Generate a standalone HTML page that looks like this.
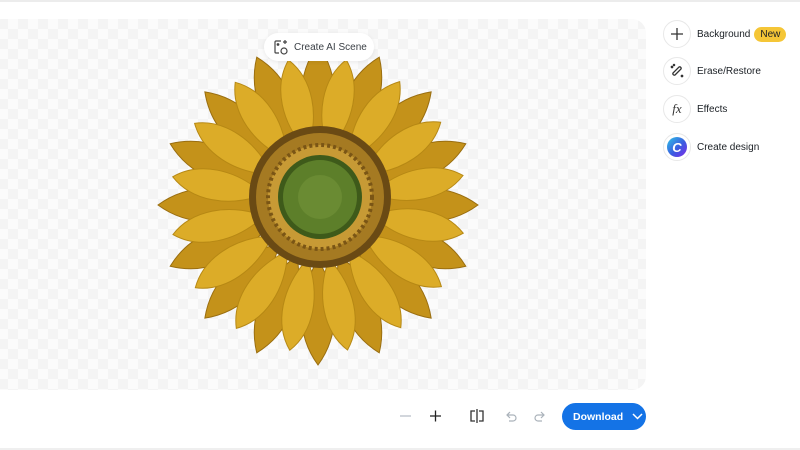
<!DOCTYPE html>
<html><head><meta charset="utf-8"><style>
*{margin:0;padding:0;box-sizing:border-box}
body{width:800px;height:450px;background:#fff;font-family:"Liberation Sans",sans-serif;position:relative;overflow:hidden;color:#0e1318}
.topline{position:absolute;left:0;top:0;width:800px;height:2px;background:#ececec}
.canvas{position:absolute;left:-12px;top:19px;width:658px;height:371px;border-radius:14px;overflow:hidden;
background-color:#fbfbfb;background-image:linear-gradient(45deg,#f4f4f4 25%,transparent 25%,transparent 75%,#f4f4f4 75%),linear-gradient(45deg,#f4f4f4 25%,transparent 25%,transparent 75%,#f4f4f4 75%);background-size:20px 20px;background-position:0 0,10px 10px}
.pill{position:absolute;left:264px;top:33px;width:110px;height:28px;background:#fff;border-radius:14px;box-shadow:0 1px 4px rgba(0,0,0,.08);font-size:10px;color:#3a3f45;display:flex;align-items:center;padding-left:9px;white-space:nowrap}
.pill svg{margin-right:5px}
.item{position:absolute;left:663px;display:flex;align-items:center;font-size:10px;color:#1a1f24;white-space:nowrap}
.circ{width:28px;height:28px;border-radius:50%;border:1.5px solid #e8e8e8;display:flex;align-items:center;justify-content:center;margin-right:6px;background:#fff}
.new{background:#f5c637;border-radius:9px;padding:2px 6px;margin-left:4px;font-size:10px;color:#1a1f24}
.dl{position:absolute;left:562px;top:403px;width:84px;height:27px;background:#1473e6;border-radius:14px;color:#fff;font-size:10.5px;font-weight:bold;display:flex;align-items:center;padding-left:11px;white-space:nowrap}
.bottomline{position:absolute;left:0;top:448px;width:800px;height:2px;background:#efefef}
</style></head><body>
<div class="topline"></div>
<div class="canvas"></div>
<svg style="position:absolute;left:0;top:0" width="800" height="450">
<defs>
<path id="pb" d="M0,-55 C22,-90 22,-130 0,-160 C-22,-130 -22,-90 0,-55Z"/>
<path id="pf" d="M0,-55 C20,-88 20,-125 0,-148 C-20,-125 -20,-88 0,-55Z"/>
</defs>
<g transform="translate(318,205)">
<g fill="#c4921a" stroke="#9a6e10" stroke-width="1">
<use href="#pb" transform="rotate(0)"/><use href="#pb" transform="rotate(22.5)"/><use href="#pb" transform="rotate(45)"/><use href="#pb" transform="rotate(67.5)"/><use href="#pb" transform="rotate(90)"/><use href="#pb" transform="rotate(112.5)"/><use href="#pb" transform="rotate(135)"/><use href="#pb" transform="rotate(157.5)"/><use href="#pb" transform="rotate(180)"/><use href="#pb" transform="rotate(202.5)"/><use href="#pb" transform="rotate(225)"/><use href="#pb" transform="rotate(247.5)"/><use href="#pb" transform="rotate(270)"/><use href="#pb" transform="rotate(292.5)"/><use href="#pb" transform="rotate(315)"/><use href="#pb" transform="rotate(337.5)"/>
</g>
<g fill="#dcac28" stroke="#b68814" stroke-width="1">
<use href="#pf" transform="rotate(11)"/><use href="#pf" transform="rotate(33.5)"/><use href="#pf" transform="rotate(56)"/><use href="#pf" transform="rotate(78.5)"/><use href="#pf" transform="rotate(101)"/><use href="#pf" transform="rotate(123.5)"/><use href="#pf" transform="rotate(146)"/><use href="#pf" transform="rotate(168.5)"/><use href="#pf" transform="rotate(191)"/><use href="#pf" transform="rotate(213.5)"/><use href="#pf" transform="rotate(236)"/><use href="#pf" transform="rotate(258.5)"/><use href="#pf" transform="rotate(281)"/><use href="#pf" transform="rotate(303.5)"/><use href="#pf" transform="rotate(326)"/><use href="#pf" transform="rotate(348.5)"/>
</g>
</g>
<circle cx="320" cy="197" r="71" fill="#6a4a14"/>
<circle cx="320" cy="197" r="64" fill="#a57a22"/>
<circle cx="320" cy="197" r="52" fill="#c79a35" stroke="#7a5515" stroke-width="4" stroke-dasharray="3 3"/>
<circle cx="320" cy="197" r="42" fill="#3e5a1a"/>
<circle cx="320" cy="197" r="37" fill="#5d7f2a"/>
<circle cx="320" cy="197" r="22" fill="#6a8b33"/>
<line x1="400" y1="416" x2="411" y2="416" stroke="#b9c0c8" stroke-width="1.3"/>
<path d="M430 416h11M435.5 410.5v11" stroke="#222" stroke-width="1.3"/>
<path d="M475 411h-4v10h4M479 411h4v10h-4M477 409v14" stroke="#333" stroke-width="1.3" fill="none"/>
<path d="M510 412l-3 3 3 3M507 415h6a3 3 0 0 1 0 6h-4" stroke="#aab2ba" stroke-width="1.2" fill="none"/>
<path d="M541 412l3 3-3 3M544 415h-6a3 3 0 0 0 0 6h4" stroke="#aab2ba" stroke-width="1.2" fill="none"/>
</svg>
<div class="pill"><svg width="16" height="16" viewBox="0 0 16 16" fill="none" stroke="#444" stroke-width="1.2"><path d="M8 2H3a1 1 0 0 0-1 1v10a1 1 0 0 0 1 1h3"/><circle cx="5" cy="5.5" r="0.8" fill="#444"/><circle cx="11" cy="12" r="3"/><path d="M12 1v4M10 3h4"/></svg>Create AI Scene</div>
<div class="item" style="top:20px"><div class="circ"><svg width="14" height="14"><path d="M7 1v12M1 7h12" stroke="#333" stroke-width="1.3"/></svg></div>Background<span class="new">New</span></div>
<div class="item" style="top:57px"><div class="circ"><svg width="16" height="16" fill="none" stroke="#333" stroke-width="1.3"><path d="M6 12l6-6a1.5 1.5 0 0 0-2-2l-6 6a1.5 1.5 0 0 0 2 2z"/><circle cx="3" cy="4" r=".7" fill="#333"/><circle cx="5" cy="2" r=".6" fill="#333"/><circle cx="13" cy="13" r=".7" fill="#333"/></svg></div>Erase/Restore</div>
<div class="item" style="top:95px"><div class="circ"><span style="font-family:'Liberation Serif',serif;font-style:italic;font-size:13px;color:#333">fx</span></div>Effects</div>
<div class="item" style="top:133px"><div class="circ"><div style="width:20px;height:20px;border-radius:50%;background:linear-gradient(135deg,#2ec4e6,#3b5be0 55%,#7d2ae8);color:#fff;font-size:13px;font-style:italic;font-weight:bold;display:flex;align-items:center;justify-content:center">C</div></div>Create design</div>
<div class="dl">Download<svg style="margin-left:9px" width="11" height="7"><path d="M1 1l4.5 4.5L10 1" stroke="#fff" stroke-width="1.5" fill="none"/></svg></div>
<div class="bottomline"></div>
</body></html>
